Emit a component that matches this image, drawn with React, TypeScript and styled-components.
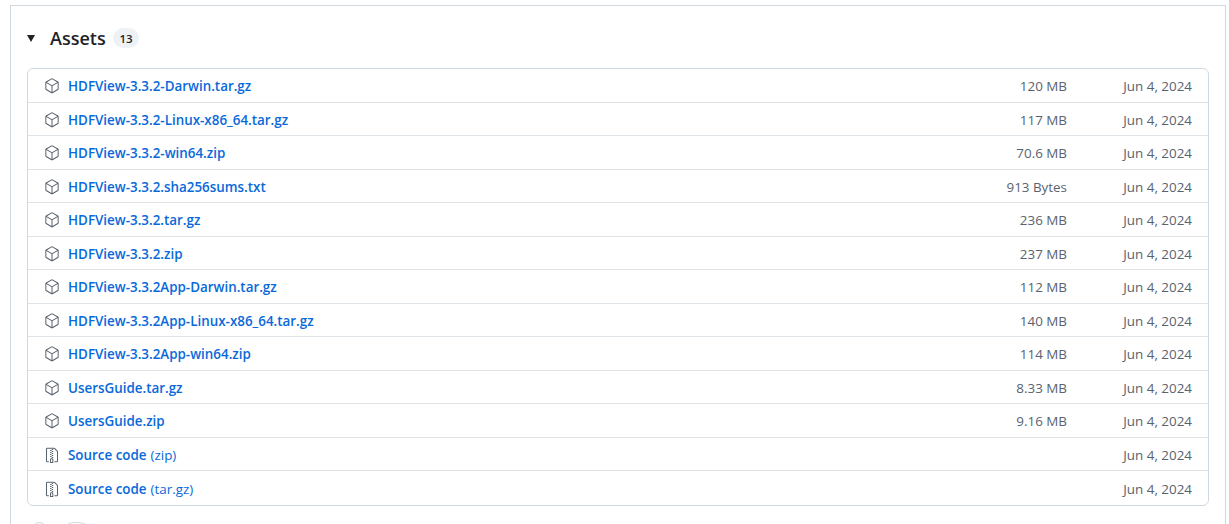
import * as React from 'react';
import styled, { createGlobalStyle } from 'styled-components';
import { GoPackage, GoFileZip } from 'react-icons/go';

const GlobalStyle = createGlobalStyle`
  html, body {
    margin: 0;
    height: 524px;
    overflow: hidden;
    background: #ffffff;
  }
  body {
    font-family: "Open Sans", "Noto Sans", sans-serif;
    color: #1f2328;
  }
`

const Page = styled.div`
  padding: 5px 3px 0 10px;
`

const Release = styled.div`
  height: 519px;
  box-sizing: border-box;
  border: solid 1px #d1d9e0;
  border-bottom: none;
  padding: 0 16px;
  overflow: hidden;
`

const Summary = styled.div`
  display: flex;
  align-items: center;
  height: 62px;
`

const Caret = styled.span`
  width: 0;
  height: 0;
  margin-top: 3px;
  border-left: 4.5px solid transparent;
  border-right: 4.5px solid transparent;
  border-top: 7px solid #1f2328;
`

const Title = styled.span`
  margin: 2px 0 0 14px;
  padding-left: 1px;
  font-size: 18px;
  font-weight: 600;
  width: 56px;
`

const Counter = styled.span`
  margin: 2px 0 0 7px;
  display: inline-flex;
  align-items: center;
  justify-content: center;
  width: 26px;
  height: 20px;
  border-radius: 10px;
  background: #eff2f5;
  font-size: 11.5px;
  font-weight: 600;
`

const AssetList = styled.div`
  border: solid 1px #d1d9e0;
  border-radius: 6px;
  box-sizing: border-box;
`

const Row = styled.div`
  display: grid;
  grid-template-columns: 1fr 120px 125px;
  align-items: center;
  height: 33.5px;
  box-sizing: border-box;
  padding: 2px 16px 0;
  font-size: 13.4px;
  border-bottom: solid 1px #dfe4e9;
  &:last-child {
    border-bottom: none;
  }
`

const AssetName = styled.a`
  display: flex;
  align-items: center;
  gap: 8px;
  color: #0969da;
  font-weight: 600;
  text-decoration: none;
  svg {
    color: #59636e;
    flex-shrink: 0;
  }
`

const Suffix = styled.span`
  font-weight: 400;
  margin-left: -4px;
`

const Meta = styled.span`
  color: #59636e;
  text-align: right;
  font-size: 13.4px;
`

const Reactions = styled.div`
  display: flex;
  gap: 14px;
  margin: 16px 0 0 5px;
`

const Pill = styled.span<{ $width: number }>`
  width: ${props => props.$width}px;
  height: 26px;
  box-sizing: border-box;
  border: solid 1px #d1d9e0;
  border-radius: 13px;
`

interface Asset {
  name: string
  size: string
}

const assets: Asset[] = [
  { name: 'HDFView-3.3.2-Darwin.tar.gz', size: '120 MB' },
  { name: 'HDFView-3.3.2-Linux-x86_64.tar.gz', size: '117 MB' },
  { name: 'HDFView-3.3.2-win64.zip', size: '70.6 MB' },
  { name: 'HDFView-3.3.2.sha256sums.txt', size: '913 Bytes' },
  { name: 'HDFView-3.3.2.tar.gz', size: '236 MB' },
  { name: 'HDFView-3.3.2.zip', size: '237 MB' },
  { name: 'HDFView-3.3.2App-Darwin.tar.gz', size: '112 MB' },
  { name: 'HDFView-3.3.2App-Linux-x86_64.tar.gz', size: '140 MB' },
  { name: 'HDFView-3.3.2App-win64.zip', size: '114 MB' },
  { name: 'UsersGuide.tar.gz', size: '8.33 MB' },
  { name: 'UsersGuide.zip', size: '9.16 MB' },
]

const sources = ['zip', 'tar.gz']
const released = 'Jun 4, 2024'

export default function App() {
  return (
    <Page>
      <GlobalStyle />
      <Release>
        <Summary>
          <Caret />
          <Title>Assets</Title>
          <Counter>13</Counter>
        </Summary>
        <AssetList>
          {assets.map(asset => (
            <Row key={asset.name}>
              <AssetName href="#">
                <GoPackage size={16} />
                {asset.name}
              </AssetName>
              <Meta>{asset.size}</Meta>
              <Meta>{released}</Meta>
            </Row>
          ))}
          {sources.map(kind => (
            <Row key={kind}>
              <AssetName href="#">
                <GoFileZip size={16} />
                Source code <Suffix>({kind})</Suffix>
              </AssetName>
              <Meta />
              <Meta>{released}</Meta>
            </Row>
          ))}
        </AssetList>
        <Reactions>
          <Pill $width={15} />
          <Pill $width={31} />
        </Reactions>
      </Release>
    </Page>
  )
}
